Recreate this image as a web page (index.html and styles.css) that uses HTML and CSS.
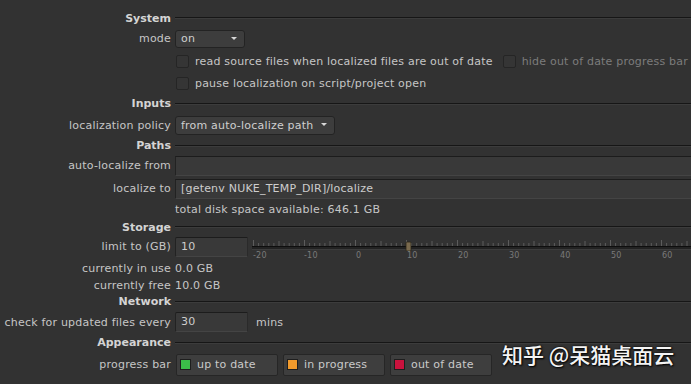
FILE: index.html
```html
<!DOCTYPE html>
<html>
<head>
<meta charset="utf-8">
<link rel="stylesheet" href="styles.css">
</head>
<body>
<div class="panel">
  <div class="row head h20 t8"><div class="label">System</div><div class="rule"></div></div>
  <div class="row h21"><div class="label">mode</div><div class="dropdown w70">on<span class="caret"></span></div></div>
  <div class="row h22 t1"><div class="label"></div>
    <span class="cb"></span><span class="cbtext">read source files when localized files are out of date</span>
    <span class="cb second"></span><span class="cbtext dim">hide out of date progress bar</span>
  </div>
  <div class="row h22"><div class="label"></div><span class="cb"></span><span class="cbtext">pause localization on script/project open</span></div>
  <div class="row head h19"><div class="label">Inputs</div><div class="rule"></div></div>
  <div class="row h22 t1"><div class="label">localization policy</div><div class="dropdown w160">from auto-localize path<span class="caret"></span></div></div>
  <div class="row head h19"><div class="label">Paths</div><div class="rule"></div></div>
  <div class="row h21"><div class="label">auto-localize from</div><div class="field grow"></div></div>
  <div class="row h21 t2"><div class="label">localize to</div><div class="field grow">[getenv NUKE_TEMP_DIR]/localize</div></div>
  <div class="row h18 t1"><div class="label"></div><span class="plain">total disk space available: 646.1 GB</span></div>
  <div class="row head h18"><div class="label">Storage</div><div class="rule"></div></div>
  <div class="row h21"><div class="label">limit to (GB)</div><div class="field w73">10</div>
    <svg class="slider" width="439" height="22" viewBox="0 0 439 22">
      <line x1="0" y1="8.5" x2="439" y2="8.5" stroke="#0e0e0e" stroke-width="1"/>
      <line x1="0" y1="10" x2="439" y2="10" stroke="#121212" stroke-width="1.2"/>
      <line x1="0" y1="11.5" x2="439" y2="11.5" stroke="#3c3c3c" stroke-width="1"/>
      <path d="M1.5 2v6M6.6 5v3M11.7 5v3M16.8 5v3M21.9 5v3M27 3v5M32.1 5v3M37.2 5v3M42.3 5v3M47.4 5v3M52.5 2v6M57.6 5v3M62.7 5v3M67.8 5v3M72.9 5v3M78 3v5M83.1 5v3M88.2 5v3M93.3 5v3M98.4 5v3M103.5 2v6M108.6 5v3M113.7 5v3M118.8 5v3M123.9 5v3M129 3v5M134.1 5v3M139.2 5v3M144.3 5v3M149.4 5v3M154.5 2v6M159.6 5v3M164.7 5v3M169.8 5v3M174.9 5v3M180 3v5M185.1 5v3M190.2 5v3M195.3 5v3M200.4 5v3M205.5 2v6M210.6 5v3M215.7 5v3M220.8 5v3M225.9 5v3M231 3v5M236.1 5v3M241.2 5v3M246.3 5v3M251.4 5v3M256.5 2v6M261.6 5v3M266.7 5v3M271.8 5v3M276.9 5v3M282 3v5M287.1 5v3M292.2 5v3M297.3 5v3M302.4 5v3M307.5 2v6M312.6 5v3M317.7 5v3M322.8 5v3M327.9 5v3M333 3v5M338.1 5v3M343.2 5v3M348.3 5v3M353.4 5v3M358.5 2v6M363.6 5v3M368.7 5v3M373.8 5v3M378.9 5v3M384 3v5M389.1 5v3M394.2 5v3M399.3 5v3M404.4 5v3M409.5 2v6M414.6 5v3M419.7 5v3M424.8 5v3M429.9 5v3M435 3v5" stroke="#5c5c5c" stroke-width="1" fill="none"/>
      <rect x="154" y="4" width="5" height="9" rx="1" fill="#7a6a4e" stroke="#2a2418" stroke-width="0.8"/>
      <g fill="#7a7a7a" font-family="DejaVu Sans, sans-serif" font-size="8">
        <text x="1" y="20">-20</text>
        <text x="52" y="20">-10</text>
        <text x="104" y="20">0</text>
        <text x="155" y="20">10</text>
        <text x="206" y="20">20</text>
        <text x="257" y="20">30</text>
        <text x="308" y="20">40</text>
        <text x="359" y="20">50</text>
        <text x="410" y="20">60</text>
      </g>
    </svg>
  </div>
  <div class="row h17 t3"><div class="label">currently in use</div><span class="plain">0.0 GB</span></div>
  <div class="row h17"><div class="label">currently free</div><span class="plain">10.0 GB</span></div>
  <div class="row head h19 t-2"><div class="label">Network</div><div class="rule"></div></div>
  <div class="row h22"><div class="label">check for updated files every</div><div class="field w73">30</div><span class="unit">mins</span></div>
  <div class="row head h19"><div class="label">Appearance</div><div class="rule"></div></div>
  <div class="row h23 t1"><div class="label">progress bar</div>
    <div class="btns">
      <div class="cbtn"><span class="sw green"></span>up to date</div>
      <div class="cbtn"><span class="sw orange"></span>in progress</div>
      <div class="cbtn"><span class="sw red"></span>out of date</div>
    </div>
  </div>
</div>
<div class="watermark">知乎 @呆猫桌面云</div>
</body>
</html>
```
FILE: styles.css
```css
html, body {
  margin: 0;
  padding: 0;
  background: #323232;
  width: 691px;
  height: 384px;
  overflow: hidden;
}
body {
  font-family: "DejaVu Sans", "Bitstream Vera Sans", sans-serif;
  font-size: 11px;
  letter-spacing: 0.2px;
  color: #c6c6c6;
  position: relative;
}
.panel {
  display: flex;
  flex-direction: column;
}
.row {
  display: flex;
  align-items: center;
  white-space: nowrap;
}
.h17 { height: 17px; }
.h18 { height: 18px; }
.h19 { height: 19px; }
.h20 { height: 20px; }
.h21 { height: 21px; }
.h22 { height: 22px; }
.h23 { height: 23px; }
.t1 { margin-top: 1px; }
.t2 { margin-top: 2px; }
.t3 { margin-top: 3px; }
.t8 { margin-top: 8px; }
.t-2 { margin-top: -2px; }
.label {
  width: 171px;
  flex: none;
  text-align: right;
  padding-right: 4px;
  box-sizing: content-box;
}
.head .label {
  font-weight: bold;
  color: #d4d4d4;
  letter-spacing: 0;
}
.rule {
  flex: 1;
  height: 0;
  border-top: 1px solid #161616;
  border-bottom: 1px solid #3c3c3c;
}
.dropdown {
  position: relative;
  height: 18px;
  box-sizing: border-box;
  background: #3d3d3d;
  border: 1px solid #232323;
  border-radius: 3px;
  padding-left: 5px;
  line-height: 16px;
  color: #cfcfcf;
}
.w70 { width: 70px; }
.w160 { width: 160px; height: 19px; line-height: 17px; }
.caret {
  position: absolute;
  right: 7px;
  top: 6px;
  width: 0;
  height: 0;
  border-left: 3px solid transparent;
  border-right: 3px solid transparent;
  border-top: 3px solid #d8d8d8;
}
.cb {
  width: 11px;
  height: 11px;
  flex: none;
  background: #353535;
  border: 1px solid #252525;
  border-radius: 2px;
  margin-left: 1px;
}
.cb.second { margin-left: 10px; }
.cbtext {
  margin-left: 6px;
}
.dim { color: #7c7c7c; }
.field {
  height: 20px;
  box-sizing: border-box;
  background: #393939;
  border-top: 1px solid #1c1c1c;
  border-left: 1px solid #222;
  border-bottom: 1px solid #444;
  padding-left: 5px;
  line-height: 18px;
  color: #cdcdcd;
}
.grow { flex: 1; }
.w73 { width: 73px; border-right: 1px solid #2a2a2a; border-radius: 2px 0 0 2px; }
.slider {
  margin-left: 4px;
  margin-top: 4px;
  flex: none;
}
.unit { margin-left: 8px; }
.plain { color: #c6c6c6; }
.btns {
  display: flex;
  gap: 5px;
  margin-left: 1px;
}
.cbtn {
  width: 102px;
  height: 22px;
  box-sizing: border-box;
  background: #3e3e3e;
  border: 1px solid #262626;
  border-radius: 2px;
  display: flex;
  align-items: center;
  color: #cacaca;
}
.sw {
  width: 11px;
  height: 11px;
  box-sizing: border-box;
  border: 1px solid #1e1e1e;
  margin-left: 3px;
  margin-right: 6px;
}
.green { background: #3bbf49; }
.orange { background: #f19a2c; }
.red { background: #c9123d; }
.watermark {
  position: absolute;
  left: 502px;
  top: 339px;
  font-family: "Noto Sans CJK SC", sans-serif;
  font-size: 21px;
  font-weight: 500;
  color: #f4f4f4;
  text-shadow: 0 0 2px #000, 1px 1px 2px #000;
  white-space: nowrap;
  letter-spacing: 0;
}
```
